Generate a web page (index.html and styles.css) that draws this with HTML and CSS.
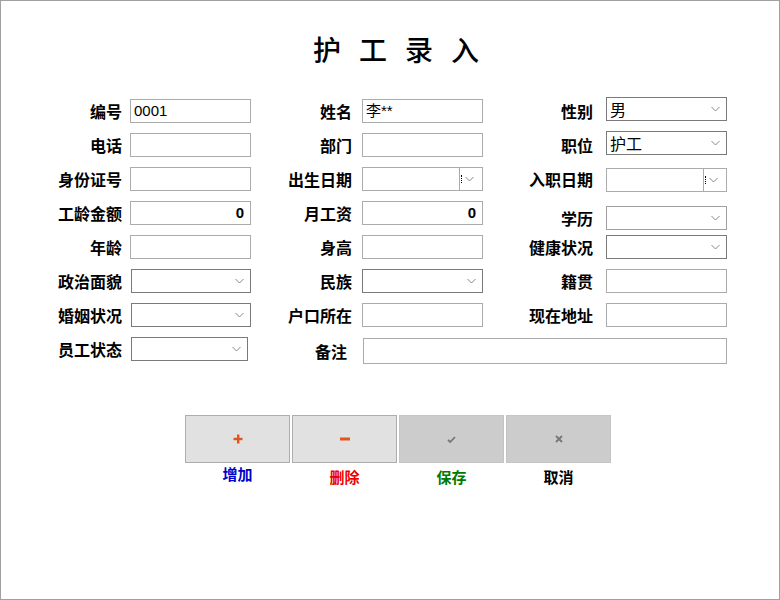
FILE: index.html
```html
<!DOCTYPE html>
<html lang="zh">
<head>
<meta charset="utf-8">
<link rel="stylesheet" href="styles.css">
</head>
<body>
<div class="window">
  <h1 class="title">护工录入</h1>
  <div class="form">
    <!-- row 1 -->
    <div class="label">编号</div>
    <div class="field text">0001</div>
    <div class="label">姓名</div>
    <div class="field text">李**</div>
    <div class="label">性别</div>
    <div class="field select up2">男<svg class="chev" width="9" height="6" viewBox="0 0 9 6"><polyline points="0.5,1 4.5,5 8.5,1" fill="none" stroke="#888" stroke-width="1"/></svg></div>
    <!-- row 2 -->
    <div class="label">电话</div>
    <div class="field"></div>
    <div class="label">部门</div>
    <div class="field"></div>
    <div class="label">职位</div>
    <div class="field select up2">护工<svg class="chev" width="9" height="6" viewBox="0 0 9 6"><polyline points="0.5,1 4.5,5 8.5,1" fill="none" stroke="#888" stroke-width="1"/></svg></div>
    <!-- row 3 -->
    <div class="label">身份证号</div>
    <div class="field"></div>
    <div class="label">出生日期</div>
    <div class="field date"><span class="date-btn"><span class="dots"></span><svg width="9" height="6" viewBox="0 0 9 6"><polyline points="0.5,1 4.5,5 8.5,1" fill="none" stroke="#888" stroke-width="1"/></svg></span></div>
    <div class="label">入职日期</div>
    <div class="field date down1"><span class="date-btn"><span class="dots"></span><svg width="9" height="6" viewBox="0 0 9 6"><polyline points="0.5,1 4.5,5 8.5,1" fill="none" stroke="#888" stroke-width="1"/></svg></span></div>
    <!-- row 4 -->
    <div class="label">工龄金额</div>
    <div class="field text num">0</div>
    <div class="label">月工资</div>
    <div class="field text num">0</div>
    <div class="label down4">学历</div>
    <div class="field select light down4"><svg class="chev" width="9" height="6" viewBox="0 0 9 6"><polyline points="0.5,1 4.5,5 8.5,1" fill="none" stroke="#888" stroke-width="1"/></svg></div>
    <!-- row 5 -->
    <div class="label">年龄</div>
    <div class="field"></div>
    <div class="label">身高</div>
    <div class="field"></div>
    <div class="label">健康状况</div>
    <div class="field select"><svg class="chev" width="9" height="6" viewBox="0 0 9 6"><polyline points="0.5,1 4.5,5 8.5,1" fill="none" stroke="#888" stroke-width="1"/></svg></div>
    <!-- row 6 -->
    <div class="label">政治面貌</div>
    <div class="field select"><svg class="chev" width="9" height="6" viewBox="0 0 9 6"><polyline points="0.5,1 4.5,5 8.5,1" fill="none" stroke="#888" stroke-width="1"/></svg></div>
    <div class="label">民族</div>
    <div class="field select"><svg class="chev" width="9" height="6" viewBox="0 0 9 6"><polyline points="0.5,1 4.5,5 8.5,1" fill="none" stroke="#888" stroke-width="1"/></svg></div>
    <div class="label">籍贯</div>
    <div class="field"></div>
    <!-- row 7 -->
    <div class="label">婚姻状况</div>
    <div class="field select"><svg class="chev" width="9" height="6" viewBox="0 0 9 6"><polyline points="0.5,1 4.5,5 8.5,1" fill="none" stroke="#888" stroke-width="1"/></svg></div>
    <div class="label">户口所在</div>
    <div class="field"></div>
    <div class="label">现在地址</div>
    <div class="field"></div>
    <!-- row 8 -->
    <div class="label">员工状态</div>
    <div class="field select narrow"><svg class="chev" width="9" height="6" viewBox="0 0 9 6"><polyline points="0.5,1 4.5,5 8.5,1" fill="none" stroke="#888" stroke-width="1"/></svg></div>
    <div class="label remark-label">备注</div>
    <div class="field remark"></div>
  </div>

  <div class="actions">
    <div class="action">
      <div class="btn btn-light">
        <svg width="10" height="10" viewBox="0 0 10 10"><rect x="4" y="0.5" width="2.4" height="9" fill="#e2561c"/><rect x="0.5" y="3.8" width="9" height="2.4" fill="#e2561c"/></svg>
      </div>
      <div class="cap cap-add">增加</div>
    </div>
    <div class="action">
      <div class="btn btn-light">
        <svg width="10" height="4" viewBox="0 0 10 4"><rect x="0" y="0.5" width="10" height="3" fill="#e2561c"/></svg>
      </div>
      <div class="cap cap-del">删除</div>
    </div>
    <div class="action">
      <div class="btn btn-dark">
        <svg width="9" height="7" viewBox="0 0 9 7"><polyline points="1,4 3.2,6 8,1" fill="none" stroke="#777" stroke-width="1.8"/></svg>
      </div>
      <div class="cap cap-save">保存</div>
    </div>
    <div class="action">
      <div class="btn btn-dark">
        <svg width="8" height="8" viewBox="0 0 8 8"><path d="M1 1 L7 7 M7 1 L1 7" stroke="#777" stroke-width="1.8"/></svg>
      </div>
      <div class="cap cap-cancel">取消</div>
    </div>
  </div>
</div>
</body>
</html>
```
FILE: styles.css
```css
* { box-sizing: border-box; }

html, body {
  margin: 0;
  padding: 0;
  background: #ffffff;
}

body {
  font-family: "Noto Sans CJK SC", "Liberation Sans", sans-serif;
  color: #000;
}

.window {
  width: 780px;
  height: 600px;
  border: 1px solid #a0a0a0;
  background: #fff;
  overflow: hidden;
}

.title {
  margin: 32px 0 0 0;
  height: 32px;
  font-size: 28px;
  line-height: 32px;
  font-weight: 500;
  letter-spacing: 18px;
  text-align: center;
  padding-left: 30px;
}

.form {
  margin: 34px 0 0 39px;
  display: grid;
  grid-template-columns: 90px 121px 111px 121px 123px 121px;
  grid-auto-rows: 24px;
  row-gap: 10px;
  align-items: center;
}

.label {
  font-size: 16px;
  font-weight: 700;
  line-height: 24px;
  height: 24px;
  text-align: right;
  white-space: nowrap;
}
.form .label:nth-child(6n+1) { padding-right: 8px; }
.form .label:nth-child(6n+3) { padding-right: 10px; }
.form .label:nth-child(6n+5) { padding-right: 13px; }

.field {
  height: 24px;
  border: 1px solid #ababab;
  background: #fff;
  position: relative;
  font-size: 16px;
  line-height: 22px;
  padding: 0 3px;
  white-space: nowrap;
  overflow: hidden;
}

.text {
  font-family: "Liberation Sans", "Noto Sans CJK SC", sans-serif;
  font-size: 15px;
}

.num {
  text-align: right;
  padding-right: 6px;
  font-weight: 700;
}

.select {
  border-color: #7a7a7a;
  display: flex;
  align-items: center;
  padding-left: 3px;
}
.select.light { border-color: #a0a0a0; }
.select.narrow { width: 117px; margin-left: 2px; }
.form > .field.select:nth-child(6n+2) { margin-left: 1px; }

.chev {
  margin-left: auto;
  margin-right: 3px;
  flex: none;
}

.up2 { margin-top: -4px; }
.down1 { margin-top: 2px; }
.down4 { margin-top: 9px; }

.date {
  display: flex;
  justify-content: flex-end;
  padding: 0;
}
.date-btn {
  width: 23px;
  height: 22px;
  border-left: 1px solid #ababab;
  display: flex;
  align-items: center;
  padding-left: 1px;
  gap: 3px;
}
.dots {
  width: 1px;
  height: 8px;
  border-left: 1px dotted #000;
}

.remark-label {
  grid-column: 3;
  padding-right: 15px !important;
  margin-top: 4px;
}
.remark {
  grid-column: 4 / span 3;
  height: 26px;
  margin-left: 1px;
  margin-top: 4px;
}

.actions {
  display: flex;
  gap: 2px;
  margin: 54px 0 0 184px;
}

.action {
  width: 105px;
  display: flex;
  flex-direction: column;
  align-items: center;
}

.btn {
  width: 105px;
  height: 48px;
  display: flex;
  align-items: center;
  justify-content: center;
}
.btn-light {
  background: #e1e1e1;
  border: 1px solid #adadad;
}
.btn-dark {
  background: #cccccc;
  border: 1px solid #c4c4c4;
}

.cap {
  font-size: 15px;
  font-weight: 700;
  line-height: 20px;
  margin-top: 4px;
}
.cap-add { color: #0000cc; margin-top: 1px; }
.cap-del { color: #ee0000; }
.cap-save { color: #007a00; }
.cap-cancel { color: #000; }
```
